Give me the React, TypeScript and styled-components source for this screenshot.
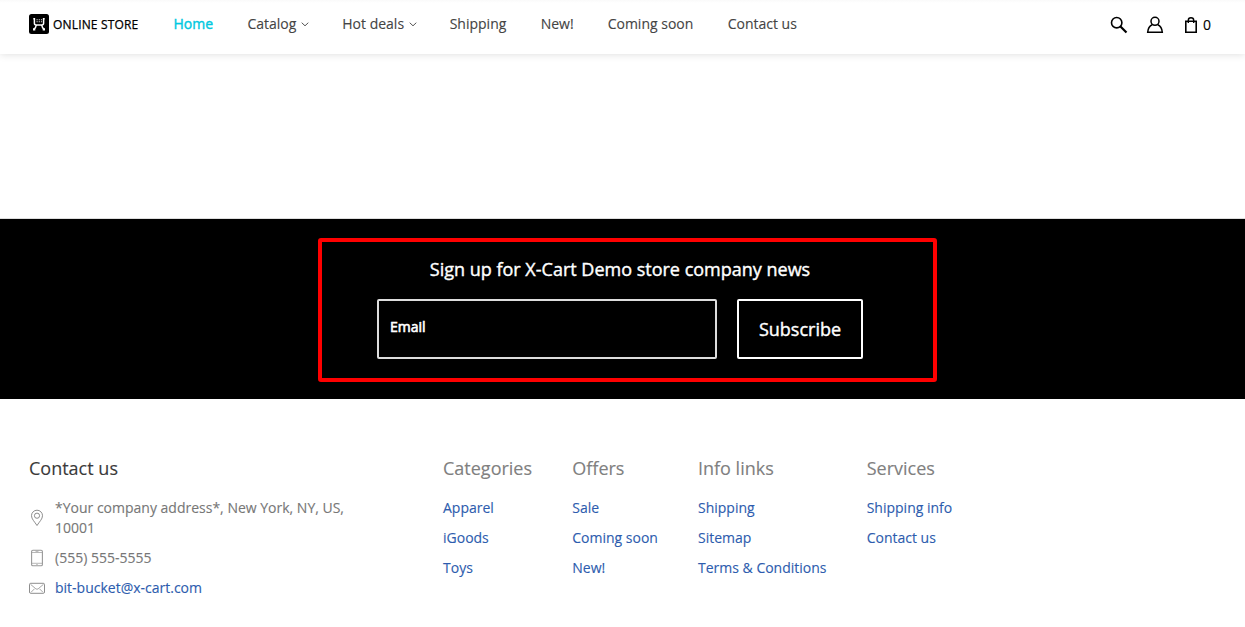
import React from 'react';
import styled, { createGlobalStyle } from 'styled-components';

const GlobalStyle = createGlobalStyle`
  *, *::before, *::after { box-sizing: border-box; }
  body {
    margin: 0;
    background: #fff;
    color: #444;
    font: 14px/20px "Open Sans", sans-serif;
    -webkit-text-stroke: 0.12px;
    overflow: hidden;
  }
  ul { margin: 0; padding: 0; list-style: none; }
  a { text-decoration: none; color: inherit; }
`;

const Page = styled.div`
  height: 627px;
  display: flex;
  flex-direction: column;
`;

const Header = styled.header`
  height: 54px;
  flex: none;
  display: flex;
  align-items: flex-start;
  padding: 14px 34px 0 29px;
  background: linear-gradient(#fafafa, #fff 3px);
  box-shadow: 0 0 8px rgba(0, 0, 0, 0.15);
`;

const Logo = styled.a`
  display: flex;
  align-items: flex-start;
  gap: 4px;
  width: 144.5px;
  height: 20px;
  color: #000;
  font-size: 12px;
  line-height: 21px;
  letter-spacing: 0.17px;
  white-space: nowrap;
  -webkit-text-stroke: 0.25px;
`;

const Nav = styled.nav`
  display: flex;
  flex: 1;
`;

const NavLink = styled.a<{ $width: number; $active?: boolean }>`
  flex: none;
  width: ${p => p.$width}px;
  display: flex;
  align-items: center;
  gap: 5px;
  white-space: nowrap;
  color: ${p => (p.$active ? '#00c8e0' : '#444')};
  -webkit-text-stroke: ${p => (p.$active ? '0.4px' : '0.12px')};
`;

const Tools = styled.div`
  display: flex;
  align-items: center;
  gap: 18px;
  height: 22px;
  color: #000;
`;

const Cart = styled.div`
  display: flex;
  align-items: center;
  gap: 5px;
  margin-left: 2px;
`;

const Newsletter = styled.section`
  flex: none;
  height: 181px;
  margin-top: 164px;
  padding: 19px 0 0 318px;
  background: #000;
  border-top: 1px solid #ddd;
`;

const Highlight = styled.div`
  width: 619px;
  height: 144px;
  padding: 15px 70px 0 55px;
  border: 4px solid #f00;
  border-radius: 3px;
`;

const NewsTitle = styled.h3`
  margin: 0 0 17px;
  color: #fff;
  font-size: 18px;
  line-height: 25px;
  font-weight: 400;
  text-align: center;
  white-space: nowrap;
  -webkit-text-stroke: 0.4px;
`;

const Form = styled.form`
  display: flex;
  gap: 20px;
`;

const EmailInput = styled.input`
  width: 340px;
  height: 60px;
  padding: 0 11px 5px;
  background: #000;
  border: 2px solid #ddd;
  border-radius: 2px;
  color: #fff;
  font: 400 14px "Open Sans", sans-serif;
  -webkit-text-stroke: 0.6px;
  outline: 0;
  &::placeholder { color: #fff; opacity: 1; }
`;

const SubscribeButton = styled.button`
  width: 126px;
  height: 60px;
  padding: 0;
  background: #000;
  border: 2px solid #fff;
  border-radius: 2px;
  color: #fff;
  font: 400 18px "Open Sans", sans-serif;
  -webkit-text-stroke: 0.4px;
`;

const Footer = styled.footer`
  display: flex;
  padding: 57px 29px 0;
`;

const Column = styled.section<{ $width: number }>`
  flex: none;
  width: ${p => p.$width}px;
`;

const Heading = styled.h4<{ $dark?: boolean }>`
  margin: 0 0 17px;
  font-size: 18px;
  line-height: 25px;
  font-weight: 400;
  color: ${p => (p.$dark ? '#3a3a3a' : '#808080')};
`;

const List = styled.ul`
  display: flex;
  flex-direction: column;
  gap: 10px;
  white-space: nowrap;
`;

const Link = styled.a`
  color: #2d5cae;
`;

const ContactRow = styled.li`
  display: flex;
  align-items: center;
  gap: 10px;
  color: #777;
`;

const ContactText = styled.span`
  width: 310px;
  white-space: normal;
`;

const CartLogo = () => (
  <svg width="20" height="20" viewBox="0 0 20 20">
    <rect width="20" height="20" rx="2.5" />
    <g fill="none" stroke="#fff" strokeWidth="1.5">
      <path d="M4.300 4.700h1.100v4.600q0 1.700 1.800 1.700h5.600q1.800 0 1.800-1.700V4.700h1.100" />
      <path d="M7.300 11Q7 13.500 5 15.200M12.700 11q.3 2.500 2.300 4.200" />
    </g>
    <path d="M4 14.200h2.300v2.200H4zM13.700 14.200H16v2.200h-2.300z" fill="#fff" />
    <path d="M7.500 5.700h5.600M7.500 7.800h5.600" stroke="#ddd" strokeWidth="1.100" strokeDasharray="1.200 1" />
  </svg>
);

const Chevron = () => (
  <svg width="8" height="6" viewBox="0 0 8 6" fill="none" stroke="#555">
    <path d="M.7 1.700 4 4.800l3.300-3.100" />
  </svg>
);

const SearchIcon = () => (
  <svg width="18" height="18" viewBox="0 0 18 18" fill="none" stroke="#000">
    <circle cx="6.700" cy="6.700" r="5.200" strokeWidth="1.600" />
    <path d="m10.500 10.500 6 6" strokeWidth="2.200" />
  </svg>
);

const UserIcon = () => (
  <svg width="18" height="18" viewBox="0 0 18 18" fill="none" stroke="#000" strokeWidth="1.500">
    <circle cx="9" cy="5.300" r="4" />
    <path d="M6.200 8.800C3.600 10 2 12.700 1.700 16.200h14.600c-.3-3.500-1.900-6.200-4.500-7.400" />
  </svg>
);

const BagIcon = () => (
  <svg width="14" height="18" viewBox="0 0 14 18" fill="none" stroke="#000" strokeWidth="1.600">
    <path d="M1.800 5.300h10.400v10.900H1.800z" />
    <path d="M4.300 7V4.200Q4.300 1.800 7 1.800t2.700 2.400V7" strokeWidth="1.400" />
  </svg>
);

const PinIcon = () => (
  <svg width="16" height="18" viewBox="0 0 16 18" fill="none" stroke="#808080" strokeWidth=".9">
    <path d="M8 16.500C5.500 12.600 2.500 10 2.500 6.700a5.500 5.500 0 0 1 11 0C13.500 10 10.500 12.600 8 16.500z" />
    <circle cx="8" cy="6.700" r="2.600" />
  </svg>
);

const PhoneIcon = () => (
  <svg width="16" height="18" viewBox="0 0 16 18" fill="none" stroke="#999" strokeWidth="1.100">
    <rect x="2.600" y="1.300" width="10.800" height="15.400" rx="1.300" />
    <path d="M2.500 3.500h11M2.500 14.300h11M6.500 2.400h3M7.300 15.500h1.400" strokeWidth=".7" />
  </svg>
);

const MailIcon = () => (
  <svg width="16" height="18" viewBox="0 0 16 18" fill="none" stroke="#808080" strokeWidth=".9">
    <rect x=".5" y="4.300" width="15" height="10" rx="1.200" />
    <path d="m1.500 5.300 5.300 4.500q1.200.9 2.400 0l5.300-4.500M2 13.300l3.500-3.500M14 13.300l-3.500-3.500" strokeWidth=".7" />
  </svg>
);

const navItems = [
  { label: 'Home', width: 73.9, active: true },
  { label: 'Catalog', width: 94.9, menu: true },
  { label: 'Hot deals', width: 107.4, menu: true },
  { label: 'Shipping', width: 91 },
  { label: 'New!', width: 67 },
  { label: 'Coming soon', width: 120 },
  { label: 'Contact us', width: 90 },
];

const columns = [
  { title: 'Categories', width: 129.3, links: ['Apparel', 'iGoods', 'Toys'] },
  { title: 'Offers', width: 125.7, links: ['Sale', 'Coming soon', 'New!'] },
  { title: 'Info links', width: 168.7, links: ['Shipping', 'Sitemap', 'Terms & Conditions'] },
  { title: 'Services', width: 120, links: ['Shipping info', 'Contact us'] },
];

export default function App() {
  return (
    <Page>
      <GlobalStyle />
      <Header>
        <Logo href="#"><CartLogo />ONLINE STORE</Logo>
        <Nav>
          {navItems.map(item => (
            <NavLink key={item.label} href="#" $width={item.width} $active={item.active}>
              {item.label}
              {item.menu && <Chevron />}
            </NavLink>
          ))}
        </Nav>
        <Tools>
          <SearchIcon />
          <UserIcon />
          <Cart><BagIcon /><span>0</span></Cart>
        </Tools>
      </Header>
      <Newsletter>
        <Highlight>
          <NewsTitle>Sign up for X-Cart Demo store company news</NewsTitle>
          <Form>
            <EmailInput type="email" placeholder="Email" />
            <SubscribeButton type="button">Subscribe</SubscribeButton>
          </Form>
        </Highlight>
      </Newsletter>
      <Footer>
        <Column $width={414}>
          <Heading $dark>Contact us</Heading>
          <List>
            <ContactRow><PinIcon /><ContactText>*Your company address*, New York, NY, US, 10001</ContactText></ContactRow>
            <ContactRow><PhoneIcon /><ContactText>(555) 555-5555</ContactText></ContactRow>
            <ContactRow><MailIcon /><Link href="#">bit-bucket@x-cart.com</Link></ContactRow>
          </List>
        </Column>
        {columns.map(col => (
          <Column key={col.title} $width={col.width}>
            <Heading>{col.title}</Heading>
            <List>
              {col.links.map(link => <li key={link}><Link href="#">{link}</Link></li>)}
            </List>
          </Column>
        ))}
      </Footer>
    </Page>
  );
}
